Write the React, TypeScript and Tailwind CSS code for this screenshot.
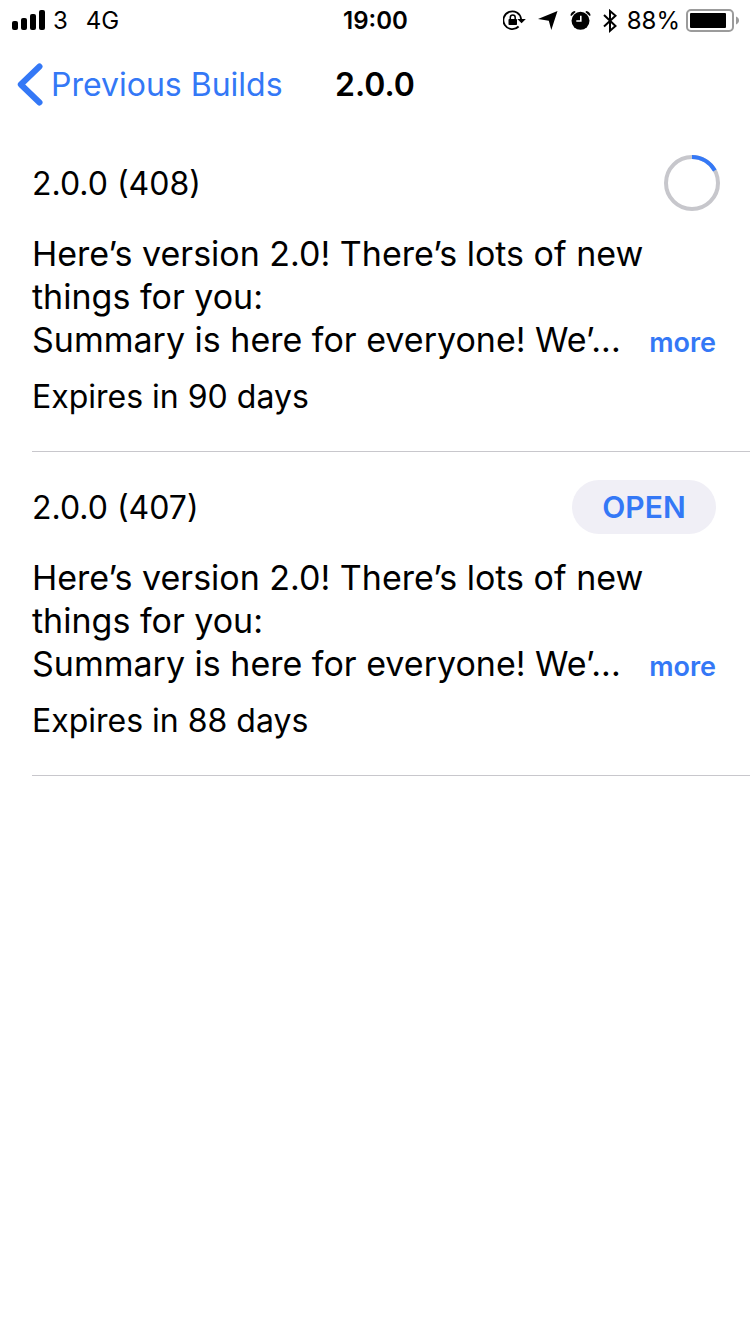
type Build = {
  number: number;
  daysLeft: number;
  progress?: number;
};

const VERSION = "2.0.0";

const builds: Build[] = [
  { number: 408, daysLeft: 90, progress: 17 },
  { number: 407, daysLeft: 88 },
];

function SignalIcon() {
  return (
    <svg width="33" height="22" viewBox="0 0 33 22" aria-hidden="true">
      <rect x="0" y="11" width="6" height="9" rx="2" />
      <rect x="9" y="8" width="6" height="12" rx="2" />
      <rect x="18" y="4" width="6" height="16" rx="2" />
      <rect x="27" y="0" width="6" height="20" rx="2" />
    </svg>
  );
}

function RotationLockIcon() {
  return (
    <svg width="23" height="22" viewBox="0 0 23 22" fill="none" aria-hidden="true">
      <path
        d="M18.1 9A8.900 8.900 0 1 0 15.600 16.500"
        stroke="black"
        strokeWidth="1.8"
      />
      <path d="M14.300 8.900h8.500l-4.200 4.300z" fill="black" />
      <rect x="5.5" y="9.1" width="8.5" height="6" rx="0.8" fill="black" />
      <path d="M7.300 9.500V7.500a2.450 2.450 0 0 1 4.900 0v2" stroke="black" strokeWidth="1.5" />
    </svg>
  );
}

function LocationIcon() {
  return (
    <svg width="20" height="22" viewBox="0 0 20 22" aria-hidden="true">
      <path d="M19.500 1 13.300 20 10.800 10.700 0 9z" />
    </svg>
  );
}

function AlarmIcon() {
  return (
    <svg width="21" height="22" viewBox="0 0 21 22" fill="none" aria-hidden="true">
      <circle cx="10.5" cy="10.8" r="9" fill="black" />
      <path d="M10.800 5.800v5.200H6.300" stroke="white" strokeWidth="1.6" />
      <path d="M.4 5.300C.8 3 2.200 1.400 4.800 1L5.600 2 1.300 5.900z" fill="black" />
      <path d="M20.600 5.300C20.200 3 18.800 1.400 16.200 1l-.8 1 4.300 3.900z" fill="black" />
    </svg>
  );
}

function BluetoothIcon() {
  return (
    <svg width="14" height="24" viewBox="0 0 14 24" fill="none" aria-hidden="true">
      <path
        d="M1 6 12.500 17 7 21.800V2l5.500 4.800L1 17.500"
        stroke="black"
        strokeWidth="2"
      />
    </svg>
  );
}

function BatteryIcon() {
  return (
    <svg width="53" height="24" viewBox="0 0 53 24" fill="none" aria-hidden="true">
      <rect x="1" y="1" width="46" height="21" rx="4" stroke="#9b9b9b" strokeWidth="2" />
      <rect x="4" y="4" width="36" height="15" rx="1" fill="black" />
      <path d="M50 7.500c2 .8 3 2.200 3 4s-1 3.200-3 4z" fill="#9b9b9b" />
    </svg>
  );
}

function StatusBar() {
  return (
    <div className="grid h-10 grid-cols-[1fr_auto_1fr] items-center pt-0.5 pr-[11px] pl-3 text-2xl">
      <div className="flex items-center gap-2">
        <SignalIcon />
        <span>3</span>
        <span className="pl-2.5">4G</span>
      </div>
      <time className="font-semibold">19:00</time>
      <div className="flex items-center justify-end gap-3">
        <RotationLockIcon />
        <LocationIcon />
        <AlarmIcon />
        <div className="flex items-center gap-2.5">
          <BluetoothIcon />
          <div className="flex items-center gap-1.5">
            <span>88%</span>
            <BatteryIcon />
          </div>
        </div>
      </div>
    </div>
  );
}

function NavBar() {
  return (
    <header className="grid h-22 grid-cols-[1fr_auto_1fr] items-center px-4 pt-0.5 text-[32px]">
      <a href="#previous-builds" className="flex items-center gap-2 text-[#3478f6]">
        <svg width="27" height="44" viewBox="0 0 27 44" fill="none" aria-hidden="true">
          <path
            d="M23.500 3.500 4.800 21.500 23.500 39.500"
            stroke="currentColor"
            strokeWidth="6"
            strokeLinecap="round"
            strokeLinejoin="round"
          />
        </svg>
        Previous Builds
      </a>
      <h1 className="font-semibold">{VERSION}</h1>
    </header>
  );
}

function ProgressRing({ value }: { value: number }) {
  return (
    <svg
      className="-mr-1"
      width="56"
      height="56"
      viewBox="0 0 56 56"
      fill="none"
      strokeWidth="4"
      role="progressbar"
      aria-label="Installing"
      aria-valuenow={value}
    >
      <circle cx="28" cy="28" r="26" stroke="#c7c7cc" />
      <circle
        cx="28"
        cy="28"
        r="26"
        stroke="#3478f6"
        pathLength="100"
        strokeDasharray={`${value} 100`}
        transform="rotate(-90 28 28)"
      />
    </svg>
  );
}

function BuildRow({ build }: { build: Build }) {
  return (
    <li className="ml-8 border-b border-[#c8c7cc] pt-[27px] pr-[34px] pb-[33px] text-[32px] leading-[43px]">
      <div className="flex h-14 items-center justify-between">
        <h2>
          {VERSION} ({build.number})
        </h2>
        {build.progress !== undefined ? (
          <ProgressRing value={build.progress} />
        ) : (
          <button
            type="button"
            className="h-[54px] w-36 rounded-full bg-[#f0eff6] text-[30px] font-semibold text-[#3478f6]"
          >
            OPEN
          </button>
        )}
      </div>
      <div className="mt-[21px] text-[34px]">
        <p>Here’s version 2.0! There’s lots of new things for you:</p>
        <div className="flex items-baseline justify-between">
          <p>Summary is here for everyone! We’...</p>
          <button
            type="button"
            className="text-[27px] leading-8 font-semibold text-[#3478f6]"
          >
            more
          </button>
        </div>
      </div>
      <p className="mt-[14px]">Expires in {build.daysLeft} days</p>
    </li>
  );
}

export default function App() {
  return (
    <div className="min-h-screen bg-white font-[Inter,sans-serif] text-black">
      <StatusBar />
      <NavBar />
      <main>
        <ul>
          {builds.map((build) => (
            <BuildRow key={build.number} build={build} />
          ))}
        </ul>
      </main>
    </div>
  );
}
